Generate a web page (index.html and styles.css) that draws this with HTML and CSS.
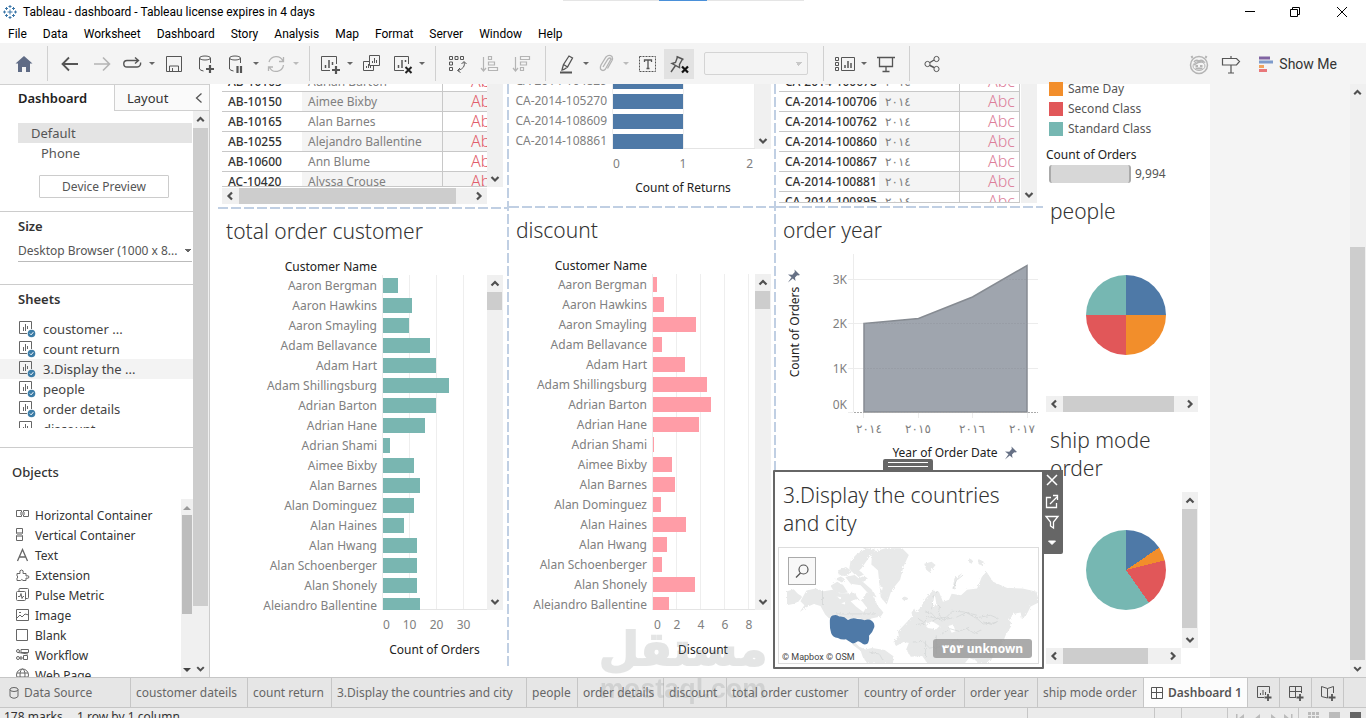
FILE: index.html
```html
<!DOCTYPE html>
<html lang="en">
<head>
  <meta charset="UTF-8">
  <title>Tableau - dashboard</title>
  <meta name="viewport" content="width=device-width, initial-scale=1.0">
  <link rel="stylesheet" href="styles.css">
</head>
<body>

  <!-- shared icons -->
  <svg class="sprite" width="0" height="0" aria-hidden="true">
    <symbol id="up" viewBox="0 0 16 16"><path d="M4.500 10.500 8 7l3.500 3.500" fill="none" stroke="#505050" stroke-width="2.200"/></symbol>
    <symbol id="down" viewBox="0 0 16 16"><path d="M4.500 6 8 9.500 11.500 6" fill="none" stroke="#505050" stroke-width="2.200"/></symbol>
    <symbol id="left" viewBox="0 0 16 16"><path d="M10 4.500 6.500 8l3.500 3.500" fill="none" stroke="#505050" stroke-width="2.200"/></symbol>
    <symbol id="right" viewBox="0 0 16 16"><path d="M6 4.500 9.500 8 6 11.500" fill="none" stroke="#505050" stroke-width="2.200"/></symbol>
    <symbol id="sheet" viewBox="0 0 18 18">
      <path d="M9 13.500H1.500v-12h12V9" fill="none" stroke="#666" stroke-width="1"/>
      <path d="M5.500 11V7M7.500 11V4M9.500 9V6" stroke="#666" stroke-width="1"/>
      <circle cx="13.500" cy="13.500" r="3.800" fill="#3c7ca6"/>
      <path d="M11.800 13.500l1.300 1.300 2.200-2.600" fill="none" stroke="#fff"/>
    </symbol>
    <symbol id="pin" viewBox="0 0 14 14">
      <path d="M7.500.5 13 6l-2 .5-.8-.3L8 8.500l.5 3.500L5.800 9.500 1 13.500 4.500 8.300 1 5.500l4.300.2L7.800 3z" fill="#667085"/>
    </symbol>
  </svg>

  <header class="titlebar">
    <svg class="logo" width="14" height="14" viewBox="0 0 14 14" stroke="#3b76a8" fill="none">
      <path d="M7 4.500v5M4.500 7h5M7 0v3M5.500 1.500h3M7 11v3M5.500 12.500h3M0 7h3M1.500 5.500v3M11 7h3M12.500 5.500v3M3.500 2v3M2 3.500h3M10.500 2v3M9 3.500h3M3.500 9v3M2 10.500h3M10.500 9v3M9 10.500h3"/>
    </svg>
    <span>Tableau - dashboard - Tableau license expires in 4 days</span>
    <div class="grabber"></div>
    <div class="window-buttons">
      <button aria-label="Minimize"><svg width="12" height="12" viewBox="0 0 12 12"><path d="M1 5.500h10" stroke="#000"/></svg></button>
      <button aria-label="Restore"><svg width="12" height="12" viewBox="0 0 12 12" fill="none" stroke="#000"><path d="M1.500 3.500h7v7h-7zM3.500 3.500v-2h7v7h-2"/></svg></button>
      <button aria-label="Close"><svg width="12" height="12" viewBox="0 0 12 12"><path d="M1 1l10 10M11 1 1 11" stroke="#000"/></svg></button>
    </div>
  </header>

  <nav class="menu">
    <a href="#">File</a>
    <a href="#">Data</a>
    <a href="#">Worksheet</a>
    <a href="#">Dashboard</a>
    <a href="#">Story</a>
    <a href="#">Analysis</a>
    <a href="#">Map</a>
    <a href="#">Format</a>
    <a href="#">Server</a>
    <a href="#">Window</a>
    <a href="#">Help</a>
  </nav>

  <div class="toolbar">
    <button class="tool home" aria-label="Start page"><svg viewBox="0 0 24 24"><path d="M12 4l8.500 7.500h-2.500V20h-4v-5h-4v5H6v-8.500H3.500z" fill="#5f6b85"/></svg></button>
    <i class="sep first"></i>
    <button class="tool" aria-label="Undo"><svg viewBox="0 0 24 24"><path d="M20 12H5M11 5.500 4.500 12l6.500 6.500" stroke-width="1.800"/></svg></button>
    <button class="tool off" aria-label="Redo"><svg viewBox="0 0 24 24"><path d="M4 12h15M13 5.500l6.500 6.500-6.500 6.500" stroke-width="1.600"/></svg></button>
    <button class="tool mid" aria-label="Replay"><svg viewBox="0 0 24 24"><path d="M18 8.500H7a3.200 3.200 0 0 0 0 6.500h10a3.500 3.500 0 0 0 3.500-4.500M15 5.500l3.500 3-3.500 3" stroke-width="1.400"/></svg></button>
    <button class="caret" aria-label="Replay options"></button>
    <button class="tool" aria-label="Save"><svg viewBox="0 0 24 24"><path d="M4.500 4.500h15v15h-15zM7.500 19v-5h9v5M10.500 19v-3"/></svg></button>
    <button class="tool" aria-label="New data source"><svg viewBox="0 0 24 24"><ellipse cx="11" cy="6" rx="5.500" ry="2"/><path d="M5.500 6v11q1 1.500 4 2M16.500 6v5"/><path d="M16 13v8M12 17h8" stroke-width="2.200"/></svg></button>
    <button class="tool mid" aria-label="Pause updates"><svg viewBox="0 0 24 24"><ellipse cx="11" cy="6" rx="5.500" ry="2"/><path d="M5.500 6v11q1 1.500 4 2M16.500 6v5"/><path d="M13.500 14v7M17 14v7" stroke-width="2.200"/></svg></button>
    <button class="caret" aria-label="Update options"></button>
    <button class="tool mid off" aria-label="Refresh"><svg viewBox="0 0 24 24"><path d="M5 10a7.500 7.500 0 0 1 14-1M19.500 13a7.500 7.500 0 0 1-14 2.500M19.500 5v4.500H15M4.500 19v-4H9" stroke-width="1.300"/></svg></button>
    <button class="caret off" aria-label="Refresh options"></button>
    <i class="sep"></i>
    <button class="tool mid" aria-label="New worksheet"><svg viewBox="0 0 24 24"><path d="M12 18.500H3.500v-14h15V12"/><path d="M7.500 16v-3M11 16V8M14.500 13v-3" stroke-width="1.500"/><path d="M18 14v8M14 18h8" stroke-width="2.200"/></svg></button>
    <button class="caret" aria-label="New sheet options"></button>
    <button class="tool" aria-label="Duplicate"><svg viewBox="0 0 24 24"><path d="M9.500 3.500h10v10h-10zM9 9.500H3.500v9h10V14M12.500 11V9M14.500 11V6M16.500 11V8M6.500 16v-2M8.500 16v-4M10.500 16v-3"/></svg></button>
    <button class="tool mid" aria-label="Clear sheet"><svg viewBox="0 0 24 24"><path d="M14 18.500H4.500v-14h14V12"/><path d="M8.500 16v-3M12 16V8M15.500 10V8" stroke-width="1.500"/><path d="M15.500 15l6 6M21.500 15l-6 6" stroke="#222" stroke-width="2"/></svg></button>
    <button class="caret" aria-label="Clear options"></button>
    <i class="sep"></i>
    <button class="tool" aria-label="Swap"><svg viewBox="0 0 24 24"><path d="M3.500 4.500h3v3h-3zM9 4.500h3v3H9zM14.500 4.500h3v3h-3zM3.500 10h3v3h-3zM3.500 15.500h3v3h-3zM18 10q2 6-6 8.500M15.500 12l2.500-2.500 2.500 2.500M14 16l-2.500 2.500 3 2"/></svg></button>
    <button class="tool off" aria-label="Sort ascending"><svg viewBox="0 0 24 24"><path d="M5.500 5v14M3 16l2.500 3 2.500-3M10.500 4.500h3v3h-3zM10.500 10h6v3h-6zM10.500 15.500h9v3h-9z" stroke-width="1.200"/></svg></button>
    <button class="tool off" aria-label="Sort descending"><svg viewBox="0 0 24 24"><path d="M5.500 5v14M3 16l2.500 3 2.500-3M10.500 4.500h9v3h-9zM10.500 10h6v3h-6zM10.500 15.500h3v3h-3z" stroke-width="1.200"/></svg></button>
    <i class="sep"></i>
    <button class="tool mid" aria-label="Highlight"><svg viewBox="0 0 24 24"><path d="M9.500 12.500 15 4l3.500 2-5 9-3.500 2.500-2 .5.500-2zM9.500 12.500l4 2.500" stroke-width="1.300"/><path d="M6 20.500h12" stroke-width="2"/></svg></button>
    <button class="caret" aria-label="Highlight options"></button>
    <button class="tool mid off" aria-label="Group"><svg viewBox="0 0 24 24"><path d="M9 15l5-8q2-2 3 0l-5.500 10q-2.500 3-5 0-.5-2 .5-4L12 5q3-3 6-.5 1 2 0 4l-4.500 8" stroke-width="1.300"/></svg></button>
    <button class="caret off" aria-label="Group options"></button>
    <button class="tool" aria-label="Show labels"><svg viewBox="0 0 24 24"><path d="M3.500 4.500h16v15h-16z" stroke-dasharray="2 1"/><path d="M8.500 10V8h7v2M12 8v8M10.500 16.500h3" stroke-width="1.300"/></svg></button>
    <button class="tool pinned" aria-label="Fix axes"><svg viewBox="0 0 24 24"><path d="M9.500 4.500l7 3M10.500 5 8.500 10.500 5 11.500l7.500 4V12.500l3-5.500M8.500 13.500 4 20" stroke-width="1.400"/><path d="M15 14.500l6 6M21 14.500l-6 6" stroke="#111" stroke-width="2.200"/></svg></button>
    <select class="fit" aria-label="Fit" disabled><option></option></select>
    <i class="sep"></i>
    <button class="tool mid" aria-label="Show cards"><svg viewBox="0 0 24 24"><path d="M3.500 5.500h3v3h-3zM3.500 10.500h3v3h-3zM3.500 15.500h3v3h-3zM9.500 5.500h13v13h-13z"/><path d="M13 16v-3M16 16V9M19 16v-5" stroke-width="1.500"/></svg></button>
    <button class="caret" aria-label="Card options"></button>
    <button class="tool" aria-label="Presentation mode"><svg viewBox="0 0 24 24"><path d="M3 5.500h18M5.500 6v8.500h13V6M12 14.500v5M8.500 19.500h7" stroke-width="1.300"/></svg></button>
    <i class="sep"></i>
    <button class="tool" aria-label="Share"><svg viewBox="0 0 24 24"><circle cx="7.500" cy="12" r="2.600"/><circle cx="16.500" cy="7" r="2.600"/><circle cx="16.500" cy="17" r="2.600"/><path d="M10 10.500l4-2.500M10 13.500l4 2" stroke-width="1.400"/></svg></button>

    <button class="tool off push" aria-label="Einstein"><svg viewBox="0 0 24 24"><circle cx="12" cy="13" r="8.500" stroke-width="1.500"/><path d="M5.500 6 4.500 4M18.500 6l1-2" stroke-width="2"/><ellipse cx="12" cy="14" rx="6" ry="4.500"/><path d="M7 10q2-3 5-1 3-2 5 1-5-1-10 3" stroke-width="1.500"/><path d="M8.500 14h2.500M13 14h2.500M8.500 16.500h7" stroke-width="1.800"/></svg></button>
    <button class="tool" aria-label="Guide"><svg viewBox="0 0 24 24"><path d="M3.500 6.500h14l3 3-3 3.500h-14zM12 4v2.500M12 13v8M9 21h6" stroke-width="1.200"/></svg></button>
    <button class="showme"><svg width="15" height="16" viewBox="0 0 15 16"><path d="M0 2h11" stroke="#8064a2" stroke-width="3"/><path d="M0 6h14" stroke="#7d9bcb" stroke-width="3"/><path d="M0 10.500h5" stroke="#f0a35e" stroke-width="3"/><path d="M0 14.500h8" stroke="#e8777a" stroke-width="3"/></svg>Show Me</button>
  </div>

  <main class="workspace">
    <aside class="sidebar">
      <div class="side-tabs">
        <button class="active">Dashboard</button>
        <button>Layout <svg width="8" height="12" viewBox="0 0 8 12"><path d="M6.500 1.500 1.500 6l5 4.500" fill="none" stroke="#555" stroke-width="1.300"/></svg></button>
      </div>
      <div class="side-body">
        <div class="side-main">
          <section class="devices">
            <a class="device selected" href="#">Default</a>
            <a class="device sub" href="#">Phone</a>
            <button class="preview">Device Preview</button>
          </section>
          <section class="size">
            <h2><label for="size">Size</label></h2>
            <select id="size"><option>Desktop Browser (1000 x 8...</option></select>
          </section>
          <section class="sheets">
            <h2>Sheets</h2>
            <ul>
              <li><svg><use href="#sheet"/></svg>coustomer ...</li>
              <li><svg><use href="#sheet"/></svg>count return</li>
              <li class="selected"><svg><use href="#sheet"/></svg>3.Display the ...</li>
              <li><svg><use href="#sheet"/></svg>people</li>
              <li><svg><use href="#sheet"/></svg>order details</li>
              <li><svg><use href="#sheet"/></svg>discount</li>
            </ul>
          </section>
          <section class="objects">
            <h2>Objects</h2>
            <div class="object-list">
              <ul>
                <li><svg viewBox="0 0 14 14"><path d="M.5 2.500h5v6h-5zM7.500 2.500h5v6h-5z"/><path d="M4 4h5v3H4z" fill="#aaa" stroke="none"/></svg>Horizontal Container</li>
                <li><svg viewBox="0 0 14 14"><path d="M.5.5h6v5h-6zM.5 7.500h6v5h-6z"/><path d="M1 4h5v5H1z" fill="#aaa" stroke="none"/></svg>Vertical Container</li>
                <li><svg viewBox="0 0 14 14"><path d="M1.500 13 6.500 1.500 11.500 13M3.500 9h6" stroke-width="1.300"/></svg>Text</li>
                <li><svg viewBox="0 0 14 14"><path d="M1 5.500h3q-1-3.500 1.500-3.500T7 5.500h3V8q3-1 3 1t-3 1v2.500H7q-1-2-2.500 0H1V10q2-1 0-2z"/></svg>Extension</li>
                <li><svg viewBox="0 0 14 14"><rect x=".5" y="3.500" width="9" height="9" rx="1"/><path d="M3 3V1.500q0-1 1-1h7.500q1 0 1 1v8q0 1-1 1H10M2 8.500h2l1-3 1 5 1-2h1"/></svg>Pulse Metric</li>
                <li><svg viewBox="0 0 14 14"><path d="M.5 1.500h12v11H.5zM1 10l3-3 2 2 3-3 4 1M3 4.500h2"/></svg>Image</li>
                <li><svg viewBox="0 0 14 14"><path d="M.5 1.500h11v11H.5z"/></svg>Blank</li>
                <li><svg viewBox="0 0 14 14"><circle cx="2" cy="3" r="1.500"/><circle cx="2" cy="10" r="1.500"/><path d="M5 1.500h7.500v3H5zM3.500 10H7M5 8v4M7.500 7.500h4v4h-4zM2 4.500 12 6"/></svg>Workflow</li>
                <li><svg viewBox="0 0 14 14"><circle cx="6.500" cy="7" r="6"/><ellipse cx="6.500" cy="7" rx="2.500" ry="6"/><path d="M1 5h11M1 9h11"/></svg>Web Page</li>
              </ul>
              <div class="mini-bar"><i class="tri-up"></i><b></b><i class="tri-down"></i></div>
            </div>
          </section>
        </div>
        <div class="vbar side-scroll"><svg><use href="#up"/></svg><b></b><svg><use href="#down"/></svg></div>
      </div>
    </aside>

    <div class="canvas">
      <!-- column 1 -->
      <div class="col">
        <section class="panel top customers">
          <div class="scroller">
            <div class="clip">
              <table>
                <tr><th>AB-10105</th><td>Adrian Barton</td><td class="abc">Abc</td></tr>
                <tr><th>AB-10150</th><td>Aimee Bixby</td><td class="abc">Abc</td></tr>
                <tr><th>AB-10165</th><td>Alan Barnes</td><td class="abc">Abc</td></tr>
                <tr><th>AB-10255</th><td>Alejandro Ballentine</td><td class="abc">Abc</td></tr>
                <tr><th>AB-10600</th><td>Ann Blume</td><td class="abc">Abc</td></tr>
                <tr><th>AC-10420</th><td>Alyssa Crouse</td><td class="abc">Abc</td></tr>
              </table>
            </div>
            <div class="vbar tail"><svg><use href="#down"/></svg></div>
          </div>
          <div class="hbar"><svg><use href="#left"/></svg><b></b><svg><use href="#right"/></svg></div>
        </section>
        <section class="panel bottom orders">
          <h3>total order customer</h3>
          <p class="field">Customer Name</p>
          <div class="chart">
            <ul class="names">
              <li>Aaron Bergman</li><li>Aaron Hawkins</li><li>Aaron Smayling</li><li>Adam Bellavance</li>
              <li>Adam Hart</li><li>Adam Shillingsburg</li><li>Adrian Barton</li><li>Adrian Hane</li>
              <li>Adrian Shami</li><li>Aimee Bixby</li><li>Alan Barnes</li><li>Alan Dominguez</li>
              <li>Alan Haines</li><li>Alan Hwang</li><li>Alan Schoenberger</li><li>Alan Shonely</li><li>Alejandro Ballentine</li>
            </ul>
            <div class="plot">
              <i style="width:15px"></i><i style="width:29px"></i><i style="width:26px"></i><i style="width:47px"></i>
              <i style="width:53px"></i><i style="width:66px"></i><i style="width:53px"></i><i style="width:42px"></i>
              <i style="width:7px"></i><i style="width:31px"></i><i style="width:37px"></i><i style="width:31px"></i>
              <i style="width:21px"></i><i style="width:34px"></i><i style="width:34px"></i><i style="width:34px"></i><i style="width:37px"></i>
            </div>
            <div class="vbar"><svg><use href="#up"/></svg><b></b><svg><use href="#down"/></svg></div>
          </div>
          <div class="axis"><span>0</span><span>10</span><span>20</span><span>30</span></div>
          <p class="axis-title">Count of Orders</p>
        </section>
      </div>

      <!-- column 2 -->
      <div class="col dashed">
        <section class="panel top returns">
          <div class="chart">
            <ul class="names"><li>CA-2014-104829</li><li>CA-2014-105270</li><li>CA-2014-108609</li><li>CA-2014-108861</li></ul>
            <div class="plot"><i style="width:70px"></i><i style="width:70px"></i><i style="width:70px"></i><i style="width:70px"></i></div>
            <div class="vbar tail"><svg><use href="#down"/></svg></div>
          </div>
          <div class="axis"><span>0</span><span>1</span><span>2</span></div>
          <p class="axis-title">Count of Returns</p>
        </section>
        <section class="panel bottom discount">
          <h3>discount</h3>
          <p class="field">Customer Name</p>
          <div class="chart">
            <ul class="names">
              <li>Aaron Bergman</li><li>Aaron Hawkins</li><li>Aaron Smayling</li><li>Adam Bellavance</li>
              <li>Adam Hart</li><li>Adam Shillingsburg</li><li>Adrian Barton</li><li>Adrian Hane</li>
              <li>Adrian Shami</li><li>Aimee Bixby</li><li>Alan Barnes</li><li>Alan Dominguez</li>
              <li>Alan Haines</li><li>Alan Hwang</li><li>Alan Schoenberger</li><li>Alan Shonely</li><li>Alejandro Ballentine</li>
            </ul>
            <div class="plot">
              <i style="width:4px"></i><i style="width:11px"></i><i style="width:43px"></i><i style="width:9px"></i>
              <i style="width:32px"></i><i style="width:54px"></i><i style="width:58px"></i><i style="width:46px"></i>
              <i style="width:1px"></i><i style="width:19px"></i><i style="width:22px"></i><i style="width:8px"></i>
              <i style="width:33px"></i><i style="width:14px"></i><i style="width:9px"></i><i style="width:42px"></i><i style="width:16px"></i>
            </div>
            <div class="vbar"><svg><use href="#up"/></svg><b></b><svg><use href="#down"/></svg></div>
          </div>
          <div class="axis"><span>0</span><span>2</span><span>4</span><span>6</span><span>8</span></div>
          <p class="axis-title">Discount</p>
        </section>
      </div>

      <!-- column 3 -->
      <div class="col dashed">
        <section class="panel top details">
          <div class="scroller">
            <div class="clip">
              <table>
                <tr><th>CA-2014-100678</th><td>٢٠١٤</td><td class="abc">Abc</td></tr>
                <tr><th>CA-2014-100706</th><td>٢٠١٤</td><td class="abc">Abc</td></tr>
                <tr><th>CA-2014-100762</th><td>٢٠١٤</td><td class="abc">Abc</td></tr>
                <tr><th>CA-2014-100860</th><td>٢٠١٤</td><td class="abc">Abc</td></tr>
                <tr><th>CA-2014-100867</th><td>٢٠١٤</td><td class="abc">Abc</td></tr>
                <tr><th>CA-2014-100881</th><td>٢٠١٤</td><td class="abc">Abc</td></tr>
                <tr><th>CA-2014-100895</th><td>٢٠١٤</td><td class="abc">Abc</td></tr>
              </table>
            </div>
            <div class="vbar tail"><svg><use href="#down"/></svg></div>
          </div>
        </section>
        <section class="panel year">
          <h3>order year</h3>
          <svg class="area" width="266" height="212" viewBox="776 252 266 212">
            <path d="M853.500 254v158M848 279.500h190M848 323.500h190M848 368.500h190M848 412.500h5M863.500 413v5M918.500 413v5M972.500 413v5M1027.500 413v5" stroke="#ececec" fill="none"/>
            <path d="M864 323.500 918.500 318.500 972.500 297 1027 265.500V412H864z" fill="#9fa5ae" stroke="#868b92" stroke-width="1.500"/>
            <path d="M864 323.500h163M864 368.500h163M1003 279.500h24" stroke="#92979f" stroke-dasharray="2 1" opacity=".5"/>
            <path d="M854 412.500h184" stroke="#aaa" stroke-dasharray="2 1"/>
            <g class="tick" text-anchor="end"><text x="847" y="284">3K</text><text x="847" y="328">2K</text><text x="847" y="373">1K</text><text x="847" y="409">0K</text></g>
            <g class="tick arabic" text-anchor="middle"><text x="869" y="433">٢٠١٤</text><text x="918" y="433">٢٠١٥</text><text x="972" y="433">٢٠١٦</text><text x="1022" y="433">٢٠١٧</text></g>
            <text class="name" text-anchor="middle" x="945" y="457">Year of Order Date</text>
            <text class="name" text-anchor="middle" transform="translate(799 332) rotate(-90)">Count of Orders</text>
            <use href="#pin" x="787" y="269" width="14" height="14"/>
            <use href="#pin" x="1004" y="446" width="14" height="14"/>
          </svg>
        </section>
        <section class="map-sheet">
          <h3>3.Display the countries and city</h3>
          <div class="map">
            <svg viewBox="30 279 774 345" preserveAspectRatio="none">
              <defs>
                <!-- roughens the coastlines -->
                <filter id="coast" x="-5%" y="-5%" width="110%" height="110%">
                  <feTurbulence type="fractalNoise" baseFrequency=".18" numOctaves="3" seed="4"/>
                  <feDisplacementMap in="SourceGraphic" scale="9"/>
                </filter>
              </defs>
              <g fill="#e8e9e9" filter="url(#coast)">
                <path d="M54 408l20-6 12 14 14 8-10 14-18 8-18 4z"/>
                <path d="M112 406l28-6 24 8 26-4 24 10 30 0 10-14 8 24 12 14 18-26 20 8 12 30 18 22-8 12-28 6-14 14-18-14-92 2-14-14-14-26-20-6-22 10-20 14 14-20-12-12z"/>
                <path d="M184 392l20-12 18 10 14 22-18 2-24-6zM206 346l24-10 18 12-14 14-22 0zM228 366l28-6 20 16 30 26 16 24-20-6-28-30-30-4zM244 316l18-18 30-18 28 4-20 22-24 34-20 18-16-18zM252 350l18-4 14 12-16 8zM198 372l16-8 14 8-10 10zM266 370l20-8 10 10-14 8z"/>
                <path d="M308 292l40-12 50 0 20 20-16 34-10 40-26 32-14 42-18-22-4-40-4-40-20-18z"/>
                <path d="M396 430l10-6 12 6-12 8zM464 326l22-6 12 10-18 22-10-8zM548 404l6-34 24-16-18 22-4 26zM598 310l12 6-4 10-8-4zM626 312l16 8-4 12-12-6z"/>
                <path d="M454 456l14-26 22-24 18 4 12 30 18-6 8-18 28 4 18-16 30-4 14-34 14-16 20 30 40 18 48 2 42 10 6 32-24 12-12 24-14 14-4-20-22 4-14 22 6 18-14 22-12 30-20 18-10 26-40 6-28-10-18 22-20-30-34 0-14 20-26-22-24-8-34-12-4-14-22-4-22 12-8-12 16-18-2-14z"/>
                <path d="M426 472l8-12 10 22-14 8zM424 548l26-22 34-2 32 12 38 2 18 34 24 20-14 32H474l-16-22-34 2-14-22z"/>
                <path d="M252 556l18 18 18 8 20-4 38 6 28 20-4 20h-76l-14-20-6-18-24-18z"/>
                <path d="M700 510l14-18 10 10-12 24-20 8zM600 580l30-20 40 40-20 24h-26z"/>
              </g>
              <g fill="#fff" filter="url(#coast)">
                <path d="M244 438l16-6 18 6 14 18-10 14-22-16zM470 506l18-8 22 14-10 10-26-4zM536 512l14-4 8 20-12 4zM488 432l8-12 4 24-10 16z"/>
                <path d="M250 396l10 6-4 14-8-4zM326 392l14 4-2 10zM204 424l12 2-4 6zM216 444l14-4-4 8z"/>
              </g>
              <g fill="none" stroke="#d0d3d3" stroke-width="2" filter="url(#coast)">
                <path d="M160 406v44M200 476h120M466 470l20 4 14 16 30-4 18-18 34 2 40 10M440 508l22-4 14-20 20 4M560 486l30-14 28 16 44-8 24 10M512 540l28-20 28 8 30-12M590 520l24 14 20-10M430 560l30-2 20 20 32-4 26 16M468 556v50M500 540v56M300 590l30 6 10 18M540 560l24-8 16 20M640 500l26 8 20-12M548 404l12-28 20-16"/>
                <path d="M486 462l6-40 12-14M510 452l-4 22 14 20 28-6M488 498l16-10 14 10M448 492l14 8M620 488l20 18 40-4"/>
              </g>
              <path d="M190 481q12-5 20 3 14-2 26 10 14-8 28-3 12 0 22 4 12-5 22 2 8 6 7 18-5 16-16 26 2 16-5 24-10 6-18-3-10-8-14-2-12 8-18 1-10-6-14-9-14 2-24-4-16-2-20-14-5-16-4-30-2-18 8-23z" fill="#4e79a7"/>
            </svg>
            <button class="search" aria-label="Search"><svg width="16" height="16" viewBox="0 0 16 16" fill="none" stroke="#555" stroke-width="1.200"><circle cx="9.500" cy="6.500" r="4.500"/><path d="M6.500 10 2 14.500"/></svg></button>
            <small>© Mapbox © OSM</small>
            <button class="unknown"><span class="arabic">٣٥٣</span> unknown</button>
          </div>
          <div class="grip"></div>
          <div class="sheet-tools">
            <button aria-label="Remove"><svg viewBox="0 0 16 16"><path d="M3 3l10 10M13 3 3 13" stroke-width="1.500"/></svg></button>
            <button aria-label="Go to sheet"><svg viewBox="0 0 16 16"><path d="M7 4.500H2.500v10h10V10M6 11l7-7M9 2.500h4.500V7" stroke-width="1.300"/></svg></button>
            <button aria-label="Use as filter"><svg viewBox="0 0 16 16"><path d="M2 2.500h12L9.500 8v6l-3-2V8z" stroke-width="1.300"/></svg></button>
            <button aria-label="More options"><svg viewBox="0 0 16 16"><path d="M4.500 6h7L8 9.500z" fill="#fff"/></svg></button>
          </div>
        </section>
      </div>

      <!-- column 4 -->
      <div class="col right">
        <ul class="legend">
          <li class="orange">Same Day</li>
          <li class="red">Second Class</li>
          <li class="teal">Standard Class</li>
        </ul>
        <p class="legend-title">Count of Orders</p>
        <p class="legend-size"><i></i>9,994</p>
        <section class="people">
          <h3>people</h3>
          <div class="pie four"></div>
          <div class="hbar"><svg><use href="#left"/></svg><b></b><svg><use href="#right"/></svg></div>
        </section>
        <section class="ship">
          <h3>ship mode order</h3>
          <div class="ship-body">
            <div class="pie modes"></div>
            <div class="vbar"><svg><use href="#up"/></svg><b></b><svg><use href="#down"/></svg></div>
          </div>
          <div class="hbar"><svg><use href="#left"/></svg><b></b><svg><use href="#right"/></svg></div>
        </section>
      </div>
    </div>

    <div class="gutter"></div>
    <div class="vbar page-scroll"><svg><use href="#up"/></svg><b></b><svg><use href="#down"/></svg></div>
  </main>

  <nav class="sheet-tabs">
    <a href="#"><svg width="10" height="12" viewBox="0 0 10 12" fill="none" stroke="#666"><ellipse cx="5" cy="2.500" rx="4" ry="2"/><path d="M1 2.500v7q4 3.500 8 0v-7"/></svg>Data Source</a>
    <a href="#">coustomer dateils</a>
    <a href="#">count return</a>
    <a href="#">3.Display the countries and city</a>
    <a href="#">people</a>
    <a href="#">order details</a>
    <a href="#">discount</a>
    <a href="#">total order customer</a>
    <a href="#">country of order</a>
    <a href="#">order year</a>
    <a href="#">ship mode order</a>
    <a href="#" class="active"><svg width="12" height="12" viewBox="0 0 12 12" fill="none" stroke="#555"><path d="M.5.5h11v11H.5zM.5 5.500h11M5.500.5v11"/></svg>Dashboard 1</a>
    <button aria-label="New worksheet"><svg viewBox="0 0 16 16"><path d="M8 12.500H1.500v-11h12V8M4.500 10V8M7 10V5M9.500 10V7"/><path d="M12 9v7M8.500 12.500h7" stroke-width="1.800"/></svg></button>
    <button aria-label="New dashboard"><svg viewBox="0 0 16 16"><path d="M8 12.500H1.500v-11h12V8M1.500 6.500h12M7.500 1.500v11"/><path d="M12 9v7M8.500 12.500h7" stroke-width="1.800"/></svg></button>
    <button aria-label="New story"><svg viewBox="0 0 16 16"><path d="M7.500 13 1.500 11.500v-10l6 2 6-2V8M7.500 3.500V13"/><path d="M12 9v7M8.500 12.500h7" stroke-width="1.800"/></svg></button>
  </nav>

  <footer class="status">
    <span class="marks">178 marks</span>
    <span>1 row by 1 column</span>
    <div class="cells">
      <i></i><i></i><i></i><i></i>
      <i class="nav-cell"><svg width="60" height="12" viewBox="0 0 60 12" fill="#bbb"><path d="M0 2h1.500v10H0zM8 2v10L2 7zM24 2v10L18 7zM35 2v10l6-5zM48 2v10l6-5zM55 2h1.500v10H55z"/></svg></i>
      <i class="view-cell"><svg width="56" height="10" viewBox="0 0 56 10"><path d="M1 0h3v3H1zM5 0h3v3H5zM9 0h3v3H9zM1 4h3v3H1zM5 4h3v3H5zM9 4h3v3H9zM1 8h3v2H1zM5 8h3v2H5zM9 8h3v2H9zM22 0h11v10H22z" fill="#bbb"/><path d="M43 0h11v10H43z" fill="#666"/></svg></i>
    </div>
  </footer>

  <div class="watermark"><span>مستقل</span><small>mostaql.com</small></div>

</body>
</html>
```
FILE: styles.css
```css
* {
  margin: 0;
  padding: 0;
  box-sizing: border-box;
}

body {
  height: 100vh;
  display: flex;
  flex-direction: column;
  overflow: hidden;
  position: relative;
  background: #fff;
  color: #333;
  font-family: "Noto Sans", "Open Sans", "DejaVu Sans", sans-serif;
  font-size: 12px;
}

button, select {
  font: inherit;
  color: inherit;
  border: none;
  background: none;
}

a {
  color: inherit;
  text-decoration: none;
}

ul {
  list-style: none;
}

svg {
  display: block;
  flex: none;
}

i {
  font-style: normal;
}

.sprite {
  position: absolute;
}

.arabic {
  font-family: "DejaVu Sans", sans-serif;
}

/* title bar and menu */

.titlebar {
  flex: none;
  height: 24px;
  display: flex;
  align-items: center;
  padding-left: 3px;
  font-family: Roboto, sans-serif;
  color: #000;
}

.logo {
  margin-right: 6px;
}

.grabber {
  position: absolute;
  top: 0;
  left: 563px;
  width: 241px;
  height: 1px;
  background: linear-gradient(to right, #e5e5e5 96px, #4a90d9 96px 144px, #e5e5e5 144px);
}

.window-buttons {
  margin-left: auto;
  display: flex;
}

.window-buttons button {
  width: 45px;
  height: 20px;
  display: grid;
  place-items: center;
}

.window-buttons button:last-child {
  width: 49px;
}

.menu {
  flex: none;
  height: 19px;
  display: flex;
  align-items: center;
  gap: 16px;
  padding-left: 8px;
  font-family: Roboto, sans-serif;
  color: #000;
}

/* toolbar */

.toolbar {
  flex: none;
  height: 41px;
  display: flex;
  align-items: center;
  background: #f4f4f4;
}

.tool {
  width: 32px;
  height: 30px;
  display: grid;
  place-items: center;
}

.tool svg {
  width: 24px;
  height: 24px;
  fill: none;
  stroke: #555;
  stroke-width: 1;
}

.tool.home {
  width: 47px;
}

.tool.home svg {
  stroke: none;
}

.tool.mid {
  width: 28px;
}

.tool.off svg {
  stroke: #b4b4b4;
}

.tool.pinned {
  width: 30px;
  margin-right: 10px;
  background: #e2e2e2;
}

.tool.push {
  margin-left: auto;
}

.caret {
  width: 12px;
  height: 30px;
  display: grid;
  place-items: center;
}

.caret::before {
  content: "";
  border: 3px solid transparent;
  border-top-color: #666;
  border-bottom: none;
}

.caret.off::before {
  border-top-color: #bbb;
}

.sep {
  width: 1px;
  height: 35px;
  margin: 0 6px 0 7px;
  background: #d0d0d0;
}

.sep.first {
  margin-left: 0;
}

.fit {
  width: 104px;
  height: 23px;
  margin-right: 8px;
  border: 1px solid #d4d4d4;
  border-radius: 2px;
  opacity: 1;
  appearance: none;
  background: linear-gradient(to bottom left, #c8c8c8 50%, transparent 50%) 90px 9px / 4px 4px no-repeat,
              linear-gradient(to bottom right, #c8c8c8 50%, transparent 50%) 94px 9px / 4px 4px no-repeat;
}

.showme {
  display: flex;
  align-items: center;
  gap: 5px;
  margin: 0 29px 0 12px;
  font-family: Roboto, sans-serif;
  font-size: 14px;
}

/* workspace */

.workspace {
  flex: 1;
  min-height: 0;
  display: flex;
}

.sidebar {
  flex: none;
  width: 210px;
  display: flex;
  flex-direction: column;
  border-right: 1px solid #ccc;
}

.side-tabs {
  flex: none;
  height: 27px;
  display: flex;
  border-top: 1px solid #d0d0d0;
  font-size: 13px;
}

.side-tabs button {
  flex: 1;
  display: flex;
  align-items: center;
  justify-content: space-between;
  padding: 0 6px 0 12px;
  background: #fafafa;
  border-left: 1px solid #d0d0d0;
  border-bottom: 1px solid #d0d0d0;
}

.side-tabs .active {
  flex: none;
  width: 114px;
  padding-left: 18px;
  background: #fff;
  border: none;
  color: #222;
  font-weight: 600;
}

.side-body {
  flex: 1;
  min-height: 0;
  display: flex;
}

.side-main {
  flex: 1;
  display: flex;
  flex-direction: column;
  min-width: 0;
}

.side-main section {
  border-bottom: 1px solid #ccc;
}

.side-main h2 {
  font-size: 13px;
  line-height: 20px;
  font-weight: 600;
}

.devices {
  flex: none;
  height: 101px;
  padding: 12px 1px 0 18px;
  font-size: 13px;
  color: #555;
}

.device {
  display: block;
  line-height: 20px;
  padding-left: 13px;
}

.device.sub {
  padding-left: 23px;
}

.device.selected {
  background: #e4e4e4;
}

.preview {
  width: 130px;
  height: 23px;
  margin: 12px 0 0 21px;
  border: 1px solid #ccc;
  border-radius: 1px;
  font-size: 12px;
  line-height: 20px;
}

.size {
  flex: none;
  height: 73px;
  padding: 4px 1px 0 18px;
}

.size select {
  width: 100%;
  height: 22px;
  margin-top: 4px;
  border-bottom: 1px solid #bbb;
  appearance: none;
  color: #555;
  background: linear-gradient(to bottom left, #666 50%, transparent 50%) right 4px top 9px / 4px 4px no-repeat,
              linear-gradient(to bottom right, #666 50%, transparent 50%) right 0 top 9px / 4px 4px no-repeat;
}

.sheets {
  flex: none;
  height: 163px;
  padding-top: 4px;
}

.sheets h2 {
  padding-left: 18px;
}

.sheets ul {
  height: 109px;
  margin-top: 10px;
  overflow: hidden;
  font-size: 13px;
  color: #444;
}

.sheets li {
  height: 20px;
  display: flex;
  align-items: center;
  gap: 7px;
  padding-left: 18px;
}

.sheets li svg {
  width: 18px;
  height: 18px;
}

.sheets .selected {
  background: #f3f3f3;
}

.side-main .objects {
  flex: 1;
  min-height: 0;
  display: flex;
  flex-direction: column;
  border: none;
}

.objects h2 {
  padding: 14px 0 0 12px;
  font-weight: 500;
}

.object-list {
  flex: 1;
  min-height: 0;
  display: flex;
  margin-top: 17px;
}

.objects ul {
  flex: 1;
  min-height: 0;
  overflow: hidden;
  padding-top: 6px;
}

.objects li {
  height: 20px;
  display: flex;
  align-items: center;
  gap: 5px;
  padding-left: 16px;
}

.objects li svg {
  width: 14px;
  height: 14px;
  fill: none;
  stroke: #666;
}

.mini-bar {
  width: 12px;
  display: flex;
  flex-direction: column;
  align-items: center;
  background: #f0f0f0;
}

.mini-bar b {
  flex: 98;
  width: 10px;
  background: #bdbdbd;
}

.tri-up, .tri-down {
  border: 4px solid transparent;
}

.tri-up {
  margin: 3px 0 5px;
  border-bottom-color: #999;
}

.tri-down {
  margin-top: 54px;
  margin-bottom: 1px;
  border-top-color: #444;
}

/* scroll bars */

.vbar {
  flex: none;
  width: 16px;
  display: flex;
  flex-direction: column;
  background: #f0f0f0;
}

.hbar {
  height: 16px;
  display: flex;
  background: #f0f0f0;
}

.vbar svg, .hbar svg {
  width: 16px;
  height: 16px;
}

.vbar b, .hbar b {
  background: #cdcdcd;
}

.vbar b {
  width: 15px;
  margin-top: 1px;
}

.vbar svg:last-child {
  margin-top: auto;
}

.hbar svg:last-child {
  margin-left: auto;
}

.hbar b {
  margin-left: 1px;
}

.side-scroll svg, .page-scroll svg {
  width: 15px;
}

.side-scroll b {
  height: 478px;
}

.page-scroll b {
  margin-top: 147px;
  height: 413px;
}

/* dashboard canvas */

.canvas {
  flex: 1;
  display: grid;
  grid-template-columns: 289fr 267fr 269fr 167fr;
  padding: 0 0 8px 8px;
  min-width: 0;
}

.gutter {
  flex: none;
  width: 140px;
  background: #f4f4f4;
}

.col {
  display: flex;
  flex-direction: column;
  min-width: 0;
  min-height: 0;
}

.dashed {
  padding-left: 2px;
  background: repeating-linear-gradient(to bottom, #c0cfe3 0 10px, transparent 10px 13px) left / 2px 100% no-repeat;
}

.panel {
  overflow: hidden;
}

.top {
  flex: none;
  height: 122px;
}

.bottom, .year {
  padding-top: 2px;
  background: repeating-linear-gradient(to right, #c0cfe3 0 10px, transparent 10px 13px) top / 100% 2px no-repeat;
}

.bottom {
  flex: 1;
}

h3 {
  font-size: 21px;
  font-weight: 300;
  line-height: 28px;
  color: #333;
}

.scroller {
  display: flex;
}

.clip {
  flex: 1;
  overflow: hidden;
  border-bottom: 1px solid #c8c8c8;
}

table {
  width: 100%;
  margin-top: -12px;
  table-layout: fixed;
  border-spacing: 0;
}

th, td {
  height: 20px;
  padding: 0 6px;
  line-height: 19px;
  text-align: left;
  white-space: nowrap;
  border-bottom: 1px solid #c8c8c8;
}

th {
  font-weight: 500;
  color: #333;
}

td {
  color: #808080;
  border-right: 1px solid #c8c8c8;
}

tr:nth-child(even) td {
  background: #f4f4f4;
}

.abc {
  padding: 0 4px 0 0;
  font-size: 16px;
  font-weight: 300;
  text-align: right;
  color: #dd7f9b;
}

.customers {
  height: 123px;
  padding: 0 4px;
}

.customers .clip {
  height: 103px;
}

.customers th {
  width: 80px;
}

.customers td {
  width: 141px;
}

.customers .abc {
  width: 45px;
  padding: 0 0 0 28px;
  overflow: hidden;
  text-align: left;
  color: #e25d6b;
}

.customers .hbar {
  margin: 1px 16px 0 0;
}

.customers .hbar b {
  width: 217px;
}

.details {
  padding: 0 6px 0 3px;
}

.details .clip {
  height: 119px;
  margin-right: 1px;
}

.details th {
  width: 100px;
}

.details .abc {
  width: 60px;
}

.details td {
  font-family: "Noto Sans", "DejaVu Sans", sans-serif;
}

/* bar charts */

.field {
  line-height: 16px;
  text-align: right;
  color: #222;
}

.chart {
  display: flex;
  overflow: hidden;
}

.names {
  padding-right: 5px;
  text-align: right;
  line-height: 20px;
  color: #808080;
  white-space: nowrap;
}

.plot {
  flex: 1;
  border-left: 1px solid #eee;
  border-bottom: 1px solid #e4e4e4;
}

.plot i {
  display: block;
  height: 15px;
  margin-bottom: 5px;
}

.axis {
  display: flex;
  line-height: 16px;
  color: #808080;
  text-align: center;
}

.axis-title {
  line-height: 16px;
  text-align: center;
  color: #222;
}

.orders .names, .discount .names {
  margin-top: 1px;
}

.orders .plot, .discount .plot {
  padding-top: 3px;
}

.orders b, .discount b {
  height: 18px;
}

.orders .axis span:first-child, .discount .axis span:first-child {
  text-align: left;
}

.orders {
  padding-right: 4px;
}

.orders h3 {
  padding: 8px 0 0 8px;
}

.orders .field {
  padding: 14px 126px 0 0;
}

.orders .chart {
  height: 335px;
}

.orders .names {
  width: 164px;
}

.orders .plot {
  background: repeating-linear-gradient(to right, transparent 0 26px, #eee 26px 27px);
}

.orders .plot i {
  background: #79b6b1;
}

.orders .axis {
  padding: 7px 0 0 165px;
}

.orders .axis span {
  width: 27px;
}

.orders .axis span:first-child {
  width: 13px;
}

.orders .axis-title {
  padding: 9px 0 0 148px;
}

.discount {
  padding-right: 3px;
}

.discount h3 {
  padding: 8px 0 0 7px;
}

.discount .field {
  padding: 14px 124px 0 0;
}

.discount .chart {
  height: 336px;
}

.discount .names {
  width: 143px;
}

.discount .plot {
  background: repeating-linear-gradient(to right, transparent 0 23px, #eee 23px 24px);
}

.discount .plot i {
  background: #ff9da7;
}

.discount .axis {
  padding: 7px 0 0 145px;
}

.discount .axis span {
  width: 24px;
}

.discount .axis span:first-child {
  width: 11px;
}

.discount .axis-title {
  padding: 9px 0 0 126px;
}

.returns {
  padding-right: 3px;
}

.returns .chart {
  height: 65px;
}

.returns .names {
  width: 103px;
  margin-top: -13px;
}

.returns .plot {
  background: repeating-linear-gradient(to right, transparent 0 70px, #eee 70px 71px);
}

.returns .plot i {
  background: #4e79a7;
}

.returns .plot i:first-child {
  height: 5px;
}

.returns .axis {
  justify-content: space-between;
  padding: 7px 18px 0 104px;
}

.returns .axis-title {
  padding: 8px 0 0 86px;
}

/* order year */

.year {
  flex: none;
  height: 264px;
}

.year h3 {
  padding: 8px 0 0 7px;
}

.area {
  margin-top: 8px;
}

.tick {
  fill: #808080;
}

.name {
  fill: #222;
}

/* selected sheet */

.map-sheet {
  flex: 1;
  position: relative;
  margin: 0 -1px 0 -3px;
  padding: 9px 3px 3px;
  display: flex;
  flex-direction: column;
  border: 2px solid #666;
  border-radius: 1px;
  background: #fff;
}

.map-sheet h3 {
  padding: 0 20px 0 5px;
}

.map {
  flex: 1;
  min-height: 0;
  margin-top: 10px;
  position: relative;
  border: 1px solid #ddd;
}

.map > svg {
  width: 100%;
  height: 100%;
}

.search {
  position: absolute;
  top: 9px;
  left: 9px;
  width: 28px;
  height: 28px;
  display: grid;
  place-items: center;
  border: 1px solid #aaa;
  background: #f8f8f8;
}

.map small {
  position: absolute;
  left: 3px;
  bottom: 1px;
  font-family: Roboto, sans-serif;
  font-size: 9px;
  color: #444;
}

.unknown {
  position: absolute;
  right: 6px;
  bottom: 5px;
  height: 19px;
  padding: 0 9px;
  border-radius: 3px;
  background: rgba(150, 150, 150, .8);
  color: #fff;
  font-weight: 700;
  line-height: 19px;
}

.grip {
  position: absolute;
  top: -13px;
  left: 108px;
  width: 50px;
  height: 12px;
  border: solid #666;
  border-width: 3px 5px;
  border-radius: 2px 2px 0 0;
  background: linear-gradient(#fff 1px, #666 1px 4px, #fff 4px 5px, #666 5px);
}

.sheet-tools {
  position: absolute;
  top: -2px;
  left: 100%;
  width: 21px;
  height: 84px;
  padding-left: 2px;
  background: #666;
  border-radius: 0 0 2px 0;
}

.sheet-tools button {
  display: block;
  height: 21px;
  padding-bottom: 2px;
}

.sheet-tools svg {
  width: 16px;
  height: 16px;
  fill: none;
  stroke: #fff;
}

/* right column */

.right {
  padding: 0 13px 0 3px;
}

.legend {
  margin-top: -5px;
  padding-left: 3px;
}

.legend li {
  display: flex;
  align-items: center;
  gap: 5px;
  line-height: 20px;
  color: #555;
}

.legend li::before {
  content: "";
  width: 14px;
  height: 14px;
  background: #f28e2b;
}

.legend .red::before {
  background: #e15759;
}

.legend .teal::before {
  background: #76b7b2;
}

.legend-title {
  margin-top: 8px;
  line-height: 16px;
  color: #222;
}

.legend-size {
  display: flex;
  align-items: center;
  gap: 4px;
  margin: 2px 0 0 3px;
  line-height: 18px;
  color: #555;
}

.legend-size i {
  width: 82px;
  height: 18px;
  border: solid #aaa;
  border-width: 0 2px;
  border-radius: 3px;
  background: #d7d7d7;
}

.right h3 {
  padding-left: 4px;
}

.people h3 {
  margin-top: 14px;
}

.pie {
  width: 80px;
  height: 80px;
  margin-left: 40px;
  border-radius: 50%;
}

.four {
  margin-top: 50px;
  margin-bottom: 41px;
  background: conic-gradient(#4e79a7 90deg, #f28e2b 90deg 180deg, #e15759 180deg 270deg, #76b7b2 270deg);
}

.people .hbar b {
  width: 111px;
}

.people .hbar {
  margin-right: -1px;
}

.ship h3 {
  margin-top: 14px;
}

.ship-body {
  display: flex;
  justify-content: space-between;
  align-items: center;
  height: 156px;
  margin: 10px -1px 0 0;
}

.modes {
  background: conic-gradient(#4e79a7 56deg, #f28e2b 56deg 76deg, #e15759 76deg 145deg, #76b7b2 145deg);
}

.ship .vbar {
  height: 156px;
}

.ship .vbar b {
  height: 119px;
}

.ship .hbar {
  margin-right: 16px;
}

.ship .hbar b {
  width: 85px;
}

/* sheet tabs */

.sheet-tabs {
  flex: none;
  height: 31px;
  display: grid;
  grid-template-columns: 131px 117px 84px 195px 51px 86px 63px 132px 106px 73px 106px 104px 32px 32px 32px;
  border-top: 1px solid #c6c6c6;
  border-bottom: 1px solid #c6c6c6;
  background: #e6e6e6;
  color: #666;
}

.sheet-tabs a, .sheet-tabs button {
  display: flex;
  align-items: center;
  gap: 5px;
  padding-left: 5px;
  border-right: 1px solid #c6c6c6;
  white-space: nowrap;
  overflow: hidden;
}

.sheet-tabs a:first-child {
  padding-left: 9px;
}

.sheet-tabs .active {
  background: #fcfcfc;
  font-weight: 600;
  color: #555;
  padding-left: 7px;
}

.sheet-tabs button {
  padding-left: 8px;
}

.sheet-tabs button svg {
  width: 16px;
  height: 16px;
  fill: none;
  stroke: #555;
}

/* status bar */

.status {
  flex: none;
  height: 10px;
  display: flex;
  align-items: flex-start;
  overflow: hidden;
  padding-left: 4px;
  background: #ebebeb;
  line-height: 18px;
}

.marks {
  width: 73px;
}

.cells {
  display: flex;
  margin-left: auto;
}

.cells i {
  width: 27px;
  height: 20px;
  border-left: 1px solid #c6c6c6;
}

.cells i:first-child {
  width: 127px;
}

.cells i:nth-child(4) {
  width: 1px;
}

.cells .nav-cell {
  width: 71px;
  border-left: 1px solid #c6c6c6;
  padding: 4px 0 0 8px;
}

.cells i:nth-child(3) {
  width: 46px;
}

.cells i:nth-child(4) {
  display: none;
}

.cells .view-cell {
  width: 68px;
  padding: 4px 0 0 8px;
}

/* watermark */

.watermark {
  position: absolute;
  left: 596px;
  top: 620px;
  width: 174px;
  text-align: center;
  color: #7d8282;
  opacity: .2;
  font-family: "DejaVu Sans", sans-serif;
  font-weight: 700;
  pointer-events: none;
}

.watermark span {
  display: block;
  font-size: 46px;
  line-height: 58px;
  -webkit-text-stroke: 2px #7d8282;
}

.watermark small {
  display: block;
  font-family: "Liberation Sans", sans-serif;
  font-size: 27px;
  line-height: 22px;
}
```
